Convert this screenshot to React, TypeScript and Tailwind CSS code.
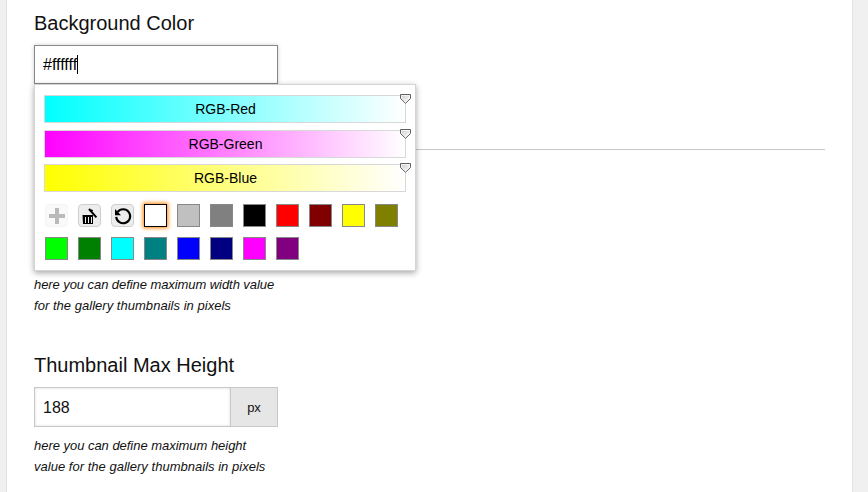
const swatches = [
  '#ffffff', '#c0c0c0', '#808080', '#000000', '#ff0000', '#800000', '#ffff00', '#808000',
  '#00ff00', '#008000', '#00ffff', '#008080', '#0000ff', '#000080', '#ff00ff', '#800080',
];

function Slider({ label, gradient }: { label: string; gradient: string }) {
  return (
    <div className={`relative h-7 w-[362px] border border-[#d8d8d8] bg-linear-to-r/srgb to-white pl-px text-center text-[14px] leading-[26px] text-black ${gradient}`}>
      {label}
      <svg className="absolute -right-[6px] -top-[2px]" width="11" height="10" viewBox="0 0 11 10">
        <defs>
          <linearGradient id="handle" x1="0" y1="0" x2="1" y2="1">
            <stop offset="0" stopColor="#cccccc" />
            <stop offset="1" stopColor="#ffffff" />
          </linearGradient>
        </defs>
        <path d="M.5.5h10v4L5.5 9.3.5 4.5z" fill="url(#handle)" stroke="#606060" />
        <path d="M1.5 1.5h8v2.6L5.5 7.9 1.5 4.1z" fill="none" stroke="#fff" strokeOpacity=".7" />
      </svg>
    </div>
  );
}

function AddIcon() {
  return (
    <svg className="block" width="21" height="21" viewBox="0 0 21 21" shapeRendering="crispEdges">
      <path d="M9 3h4v6h6v4h-6v6H9v-6H3V9h6z" fill="#bababa" />
    </svg>
  );
}

function TrashIcon() {
  return (
    <svg className="block" width="21" height="21" viewBox="0 0 21 21">
      <path d="M3.5 10H14v9H4zM6 12v6h1v-6zm3 0v6h1v-6zm3 0v6h1v-6z" fill="#000" fillRule="evenodd" />
      <path d="M10 4l7.4 8.4M12 6.4l1.4-1.6" fill="none" stroke="#000" strokeWidth="2" />
    </svg>
  );
}

function ResetIcon() {
  return (
    <svg className="block" width="21" height="21" viewBox="0 0 21 21">
      <path d="M5.6 7A7 7 0 1 1 4.2 11.8" fill="none" stroke="#000" strokeWidth="2.1" />
      <path d="M3 4v6.2h6z" fill="#000" />
    </svg>
  );
}

function ColorPicker() {
  return (
    <div className="absolute left-0 top-[39px] z-10 h-[187px] w-[382px] border border-[#d4d4d4] bg-white px-[9px] pt-[10px] shadow-[0_2px_6px_rgba(0,0,0,0.35)]">
      <Slider label="RGB-Red" gradient="from-[#00ffff]" />
      <div className="h-[7px]" />
      <Slider label="RGB-Green" gradient="from-[#ff00ff]" />
      <div className="h-[6px]" />
      <Slider label="RGB-Blue" gradient="from-[#ffff00]" />
      <div className="ml-px mt-3 flex w-[361px] flex-wrap gap-[10px]">
        <button className="size-[23px] rounded-[4px] border border-[#f4f4f4] bg-[#f9f9f9]"><AddIcon /></button>
        <button className="size-[23px] rounded-[4px] border border-[#cfcfcf] bg-[#ededed]"><TrashIcon /></button>
        <button className="size-[23px] rounded-[4px] border border-[#cfcfcf] bg-[#ededed]"><ResetIcon /></button>
        {swatches.map((color, i) => (
          <button
            key={color}
            className={`size-[23px] border ${i === 0 ? 'border-black shadow-[0_0_4px_1px_#ff8000]' : 'border-[#888]'}`}
            style={{ backgroundColor: color }}
          />
        ))}
      </div>
    </div>
  );
}

export default function App() {
  return (
    <div className="h-[492px] w-[868px] overflow-hidden bg-[#f0f0f0] pl-[6px] font-['Liberation_Sans',Arial,sans-serif] text-[#111]">
      <main className="h-[492px] w-[847px] border-x border-[#e3e3e3] bg-white pl-[27px] pr-[27px]">
        <h2 className="h-[45px] text-[20px] leading-[46px]">Background Color</h2>
        <div className="relative h-[104px] w-[244px]">
          <div className="flex h-[39px] items-center border border-[#888] bg-white pl-2 text-[16px] text-black shadow-[0_0_4px_rgba(0,0,0,0.2)]">
            #ffffff<span className="h-[19px] w-px bg-black" />
          </div>
          <ColorPicker />
        </div>
        <hr className="border-t border-[#c8c8c8]" />
        <p className="mt-[124px] text-[13px] italic leading-[21px]">
          <span className="tracking-[-0.07px]">here you can define maximum width value</span>
          <br />
          <span className="tracking-[0.03px]">for the gallery thumbnails in pixels</span>
        </p>
        <h2 className="mt-[36px] h-[35px] text-[20px] leading-[26px]">Thumbnail Max Height</h2>
        <div className="flex h-10 w-[244px] border border-[#c8c8c8]">
          <div className="flex w-[195px] items-center pl-2 pt-px text-[16px] shadow-[inset_0_0_3px_rgba(0,0,0,0.15)]">188</div>
          <div className="flex flex-1 items-center justify-center border-l border-[#c8c8c8] bg-[#e6e6e6] pt-px text-[13px]">px</div>
        </div>
        <p className="mt-2 text-[13px] italic leading-[21px]">
          <span className="tracking-[-0.03px]">here you can define maximum height</span>
          <br />
          <span className="tracking-[0.02px]">value for the gallery thumbnails in pixels</span>
        </p>
      </main>
    </div>
  );
}
